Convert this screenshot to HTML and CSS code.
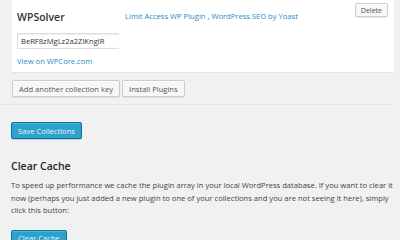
FILE: index.html
```html
<!DOCTYPE html>
<html lang="en">
<head>
    <meta charset="UTF-8">
    <meta name="viewport" content="width=device-width, initial-scale=1.0">
    <title>Collections</title>
    <link rel="stylesheet" href="styles.css">
</head>
<body>
    <div class="wrap">
        <section class="collection">
            <div class="collection-key">
                <h3>WPSolver</h3>
                <input class="key-input" type="text" value="BeRF8zMgLz2a2ZiKnglR">
                <a href="#">View on WPCore.com</a>
            </div>
            <div class="collection-plugins">
                <a href="#">Limit Access WP Plugin</a> , <a href="#">WordPress SEO by Yoast</a>
            </div>
            <div class="collection-actions">
                <button class="button">Delete</button>
            </div>
        </section>

        <div class="actions">
            <button class="button">Add another collection key</button>
            <button class="button">Install Plugins</button>
        </div>
    </div>

    <hr class="divider">

    <div class="wrap">
        <button class="button button-primary save">Save Collections</button>

        <h2>Clear Cache</h2>
        <p>To speed up performance we cache the plugin array in your local WordPress database. If you want to clear it now (perhaps you just added a new plugin to one of your collections and you are not seeing it here), simply click this button:</p>
        <button class="button button-primary">Clear Cache</button>
    </div>
</body>
</html>
```

FILE: styles.css
```css
body{
    margin: 0;
    background-color: #f1f1f1;
    color: #444;
    font-family: 'Open Sans', 'Noto Sans', sans-serif;
    font-size: 7.6px;
    overflow: hidden;
}

a{
    color: #2a8bc4;
    text-decoration: none;
}

.wrap{
    padding: 0 6px 0 11px;
}

.collection{
    display: flex;
    background-color: #fff;
    margin-left: 1px;
    height: 72px;
    box-shadow: 0 1px 1px rgba(0,0,0,.05);
}

.collection-key{
    display: flex;
    flex-direction: column;
    align-items: flex-start;
    width: 102px;
    padding-left: 5px;
}

.collection-key h3{
    margin: 10px 0 0;
    font-size: 10.5px;
    font-weight: 600;
    color: #333;
    line-height: 15px;
}

.key-input{
    box-sizing: border-box;
    width: 102px;
    height: 16px;
    margin: 8px 0 7px;
    padding: 0 3px;
    border: 1px solid #ddd;
    border-right: none;
    font-family: inherit;
    font-size: 7.6px;
    color: #333;
    box-shadow: inset 0 1px 2px rgba(0,0,0,.07);
}

.collection-plugins{
    flex: 1;
    padding: 10px 0 0 6px;
    line-height: 12px;
}

.collection-actions{
    padding: 3px 6px 0 0;
}

.button{
    box-sizing: border-box;
    height: 17px;
    padding: 0 6px;
    border: 1px solid #ccc;
    border-radius: 2px;
    background-color: #f7f7f7;
    color: #555;
    font-family: inherit;
    font-size: 7.6px;
    box-shadow: 0 1px 0 #fff inset, 0 1px 0 rgba(0,0,0,.08);
}

.collection-actions .button{
    height: 14px;
    font-size: 7px;
    padding: 0 5px;
}

.actions{
    display: flex;
    gap: 2px;
    margin: 8px 0 0 1px;
}

.divider{
    margin: 7px 0 0;
    width: 394px;
    border: none;
    border-top: 1px solid #e6e6e6;
}

.button-primary{
    background-color: #2ea2cc;
    border-color: #0074a2;
    color: #e7f4fa;
    box-shadow: inset 0 1px 0 rgba(120,200,230,.5), 0 1px 0 rgba(0,0,0,.15);
}

.save{
    margin-top: 17px;
}

h2{
    margin: 20px 0 0;
    font-size: 10.5px;
    font-weight: 600;
    color: #23282d;
    line-height: 14px;
}

p{
    margin: 6px 0 0;
    line-height: 12.5px;
}

p + .button{
    margin-top: 13px;
}
```
